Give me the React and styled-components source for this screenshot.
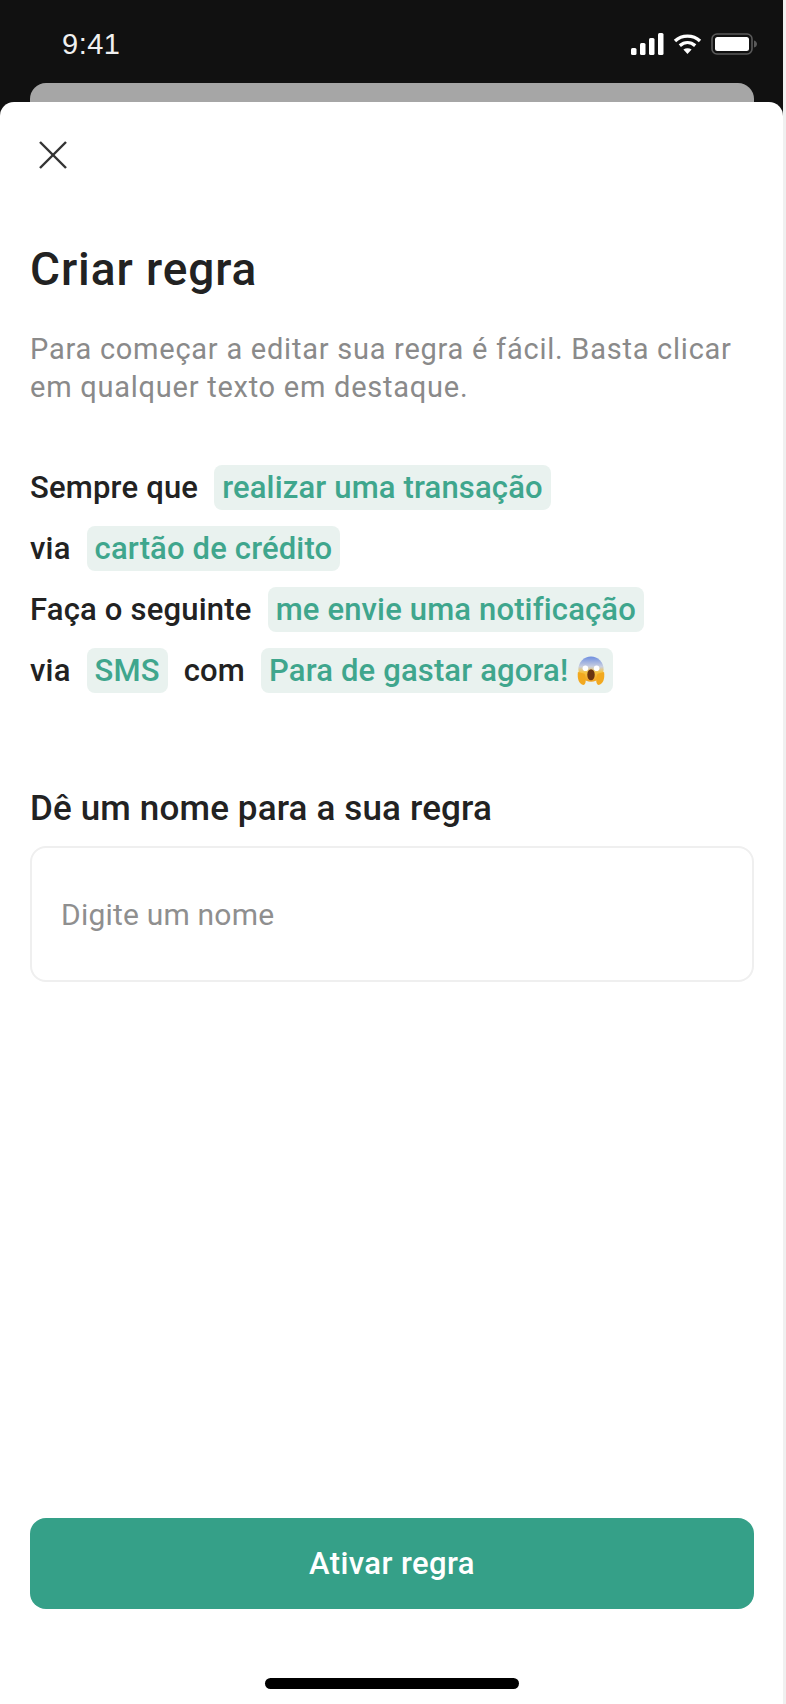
import styled, { createGlobalStyle } from 'styled-components';

const GlobalStyle = createGlobalStyle`
  html, body {
    margin: 0;
    padding: 0;
    background: #f0f0f0;
  }
  * {
    box-sizing: border-box;
  }
`;

const Screen = styled.div`
  width: 783px;
  height: 1704px;
  display: flex;
  flex-direction: column;
  background: #111111;
  font-family: 'Roboto', 'Liberation Sans', sans-serif;
`;

const StatusBar = styled.div`
  height: 83px;
  display: flex;
  align-items: center;
  justify-content: space-between;
  padding: 5px 25px 0 62px;
  flex-shrink: 0;
`;

const Time = styled.span`
  color: #f0f0f0;
  font-family: 'Liberation Sans', sans-serif;
  font-size: 29px;
  letter-spacing: 0.5px;
`;

const StatusIcons = styled.div`
  display: flex;
  align-items: center;
  gap: 9px;
`;

const BackCard = styled.div`
  height: 19px;
  margin: 0 29px 0 30px;
  background: #a6a6a6;
  border-radius: 16px 16px 0 0;
  flex-shrink: 0;
`;

const Sheet = styled.div`
  flex: 1;
  display: flex;
  flex-direction: column;
  background: #ffffff;
  border-radius: 14px 14px 0 0;
  padding: 38px 29px 15px 30px;
`;

const CloseButton = styled.button`
  width: 34px;
  height: 34px;
  margin-left: 8px;
  padding: 0;
  border: 0;
  background: none;
  display: flex;
`;

const Title = styled.h1`
  margin: 69px 0 0;
  color: #222222;
  font-size: 46px;
  line-height: 52px;
  font-weight: 500;
  letter-spacing: 0.9px;
`;

const Intro = styled.p`
  margin: 35px 0 0;
  color: #8a8a8a;
  font-size: 29px;
  line-height: 38px;
  font-weight: 400;
  letter-spacing: 0.75px;
`;

const Rule = styled.div`
  margin-top: 59px;
  display: flex;
  flex-direction: column;
  gap: 16px;
`;

const RuleRow = styled.div`
  display: flex;
  align-items: center;
  gap: 16px;
  height: 45px;
`;

const RuleText = styled.span`
  color: #222222;
  font-size: 31px;
  font-weight: 500;
  letter-spacing: 0.2px;
`;

const Chip = styled.span`
  display: inline-flex;
  align-items: center;
  gap: 9px;
  height: 45px;
  padding: 0 8px;
  border-radius: 8px;
  background: #e9f2ef;
  color: #3fa68d;
  font-size: 31px;
  font-weight: 500;
  letter-spacing: 0.15px;
`;

const FieldLabel = styled.label`
  display: block;
  margin-top: 96px;
  color: #222222;
  font-size: 35px;
  line-height: 40px;
  font-weight: 500;
  letter-spacing: 0.15px;
`;

const NameInput = styled.input`
  display: block;
  width: 100%;
  height: 136px;
  margin-top: 17px;
  padding: 0 29px;
  border: 2px solid #efefef;
  border-radius: 16px;
  background: #ffffff;
  font-family: inherit;
  font-size: 30px;
  letter-spacing: 0.2px;
  outline: none;

  &::placeholder {
    color: #8f8f8f;
    opacity: 1;
  }
`;

const Spacer = styled.div`
  flex: 1;
`;

const ActivateButton = styled.button`
  width: 100%;
  height: 91px;
  border: 0;
  border-radius: 16px;
  background: #35a088;
  color: #ffffff;
  font-family: inherit;
  font-size: 31px;
  font-weight: 500;
  letter-spacing: 0.4px;
`;

const HomeIndicator = styled.div`
  width: 254px;
  height: 11px;
  margin: 69px auto 0;
  border-radius: 6px;
  background: #000000;
`;

const SignalIcon = () => (
  <svg width="33" height="22" viewBox="0 0 33 22" fill="#ffffff">
    <rect x="0" y="15" width="5.5" height="7" rx="1.5" />
    <rect x="9" y="10" width="5.5" height="12" rx="1.5" />
    <rect x="18" y="5" width="5.5" height="17" rx="1.5" />
    <rect x="27" y="0" width="5.5" height="22" rx="1.5" />
  </svg>
);

const WifiIcon = () => (
  <svg width="29" height="22" viewBox="0 0 29 22" fill="none" stroke="#ffffff" strokeWidth="3.4">
    <path d="M2 8 C9 1.5 20 1.5 27 8" />
    <path d="M6.8 12.6 C11.5 8.6 17.5 8.6 22.2 12.6" />
    <path d="M14.5 21 L10.4 16.6 C12.8 14.8 16.2 14.8 18.6 16.6 Z" fill="#ffffff" stroke="none" />
  </svg>
);

const BatteryIcon = () => (
  <svg width="47" height="22" viewBox="0 0 47 22">
    <rect x="1" y="1" width="40" height="20" rx="5" fill="none" stroke="#5a5a5a" strokeWidth="1.6" />
    <rect x="4" y="4" width="34" height="14" rx="2.5" fill="#ffffff" />
    <path d="M43 7.5 C45 8 46 9.5 46 11 C46 12.5 45 14 43 14.5 Z" fill="#5a5a5a" />
  </svg>
);

const CloseIcon = () => (
  <svg width="30" height="30" viewBox="0 0 30 30" stroke="#333333" strokeWidth="2.4" fill="none">
    <path d="M2 2 L28 28" />
    <path d="M28 2 L2 28" />
  </svg>
);

const ScreamEmoji = () => (
  <svg width="28" height="30" viewBox="0 0 30 32">
    <defs>
      <linearGradient id="scream" x1="0" y1="0" x2="0" y2="1">
        <stop offset="0" stopColor="#6f8fe0" />
        <stop offset="0.4" stopColor="#c9cfe0" />
        <stop offset="0.62" stopColor="#f6c544" />
        <stop offset="1" stopColor="#f0a020" />
      </linearGradient>
    </defs>
    <circle cx="15" cy="14" r="13.5" fill="url(#scream)" />
    <ellipse cx="15" cy="20" rx="4" ry="6" fill="#6a3410" />
    <circle cx="9" cy="13" r="3" fill="#ffffff" />
    <circle cx="21" cy="13" r="3" fill="#ffffff" />
    <path d="M1 17 C0 24 2 30 7 31 C10 30 10 24 8 19 Z" fill="#f2a91f" />
    <path d="M29 17 C30 24 28 30 23 31 C20 30 20 24 22 19 Z" fill="#f2a91f" />
  </svg>
);

export default function App() {
  return (
    <>
      <GlobalStyle />
      <Screen>
        <StatusBar>
          <Time>9:41</Time>
          <StatusIcons>
            <SignalIcon />
            <WifiIcon />
            <BatteryIcon />
          </StatusIcons>
        </StatusBar>
        <BackCard />
        <Sheet>
          <CloseButton aria-label="Fechar">
            <CloseIcon />
          </CloseButton>
          <Title>Criar regra</Title>
          <Intro>
            Para começar a editar sua regra é fácil. Basta clicar em qualquer texto em destaque.
          </Intro>
          <Rule>
            <RuleRow>
              <RuleText>Sempre que</RuleText>
              <Chip>realizar uma transação</Chip>
            </RuleRow>
            <RuleRow>
              <RuleText>via</RuleText>
              <Chip>cartão de crédito</Chip>
            </RuleRow>
            <RuleRow>
              <RuleText>Faça o seguinte</RuleText>
              <Chip>me envie uma notificação</Chip>
            </RuleRow>
            <RuleRow>
              <RuleText>via</RuleText>
              <Chip>SMS</Chip>
              <RuleText>com</RuleText>
              <Chip>
                Para de gastar agora!
                <ScreamEmoji />
              </Chip>
            </RuleRow>
          </Rule>
          <FieldLabel htmlFor="rule-name">Dê um nome para a sua regra</FieldLabel>
          <NameInput id="rule-name" placeholder="Digite um nome" />
          <Spacer />
          <ActivateButton>Ativar regra</ActivateButton>
          <HomeIndicator />
        </Sheet>
      </Screen>
    </>
  );
}
